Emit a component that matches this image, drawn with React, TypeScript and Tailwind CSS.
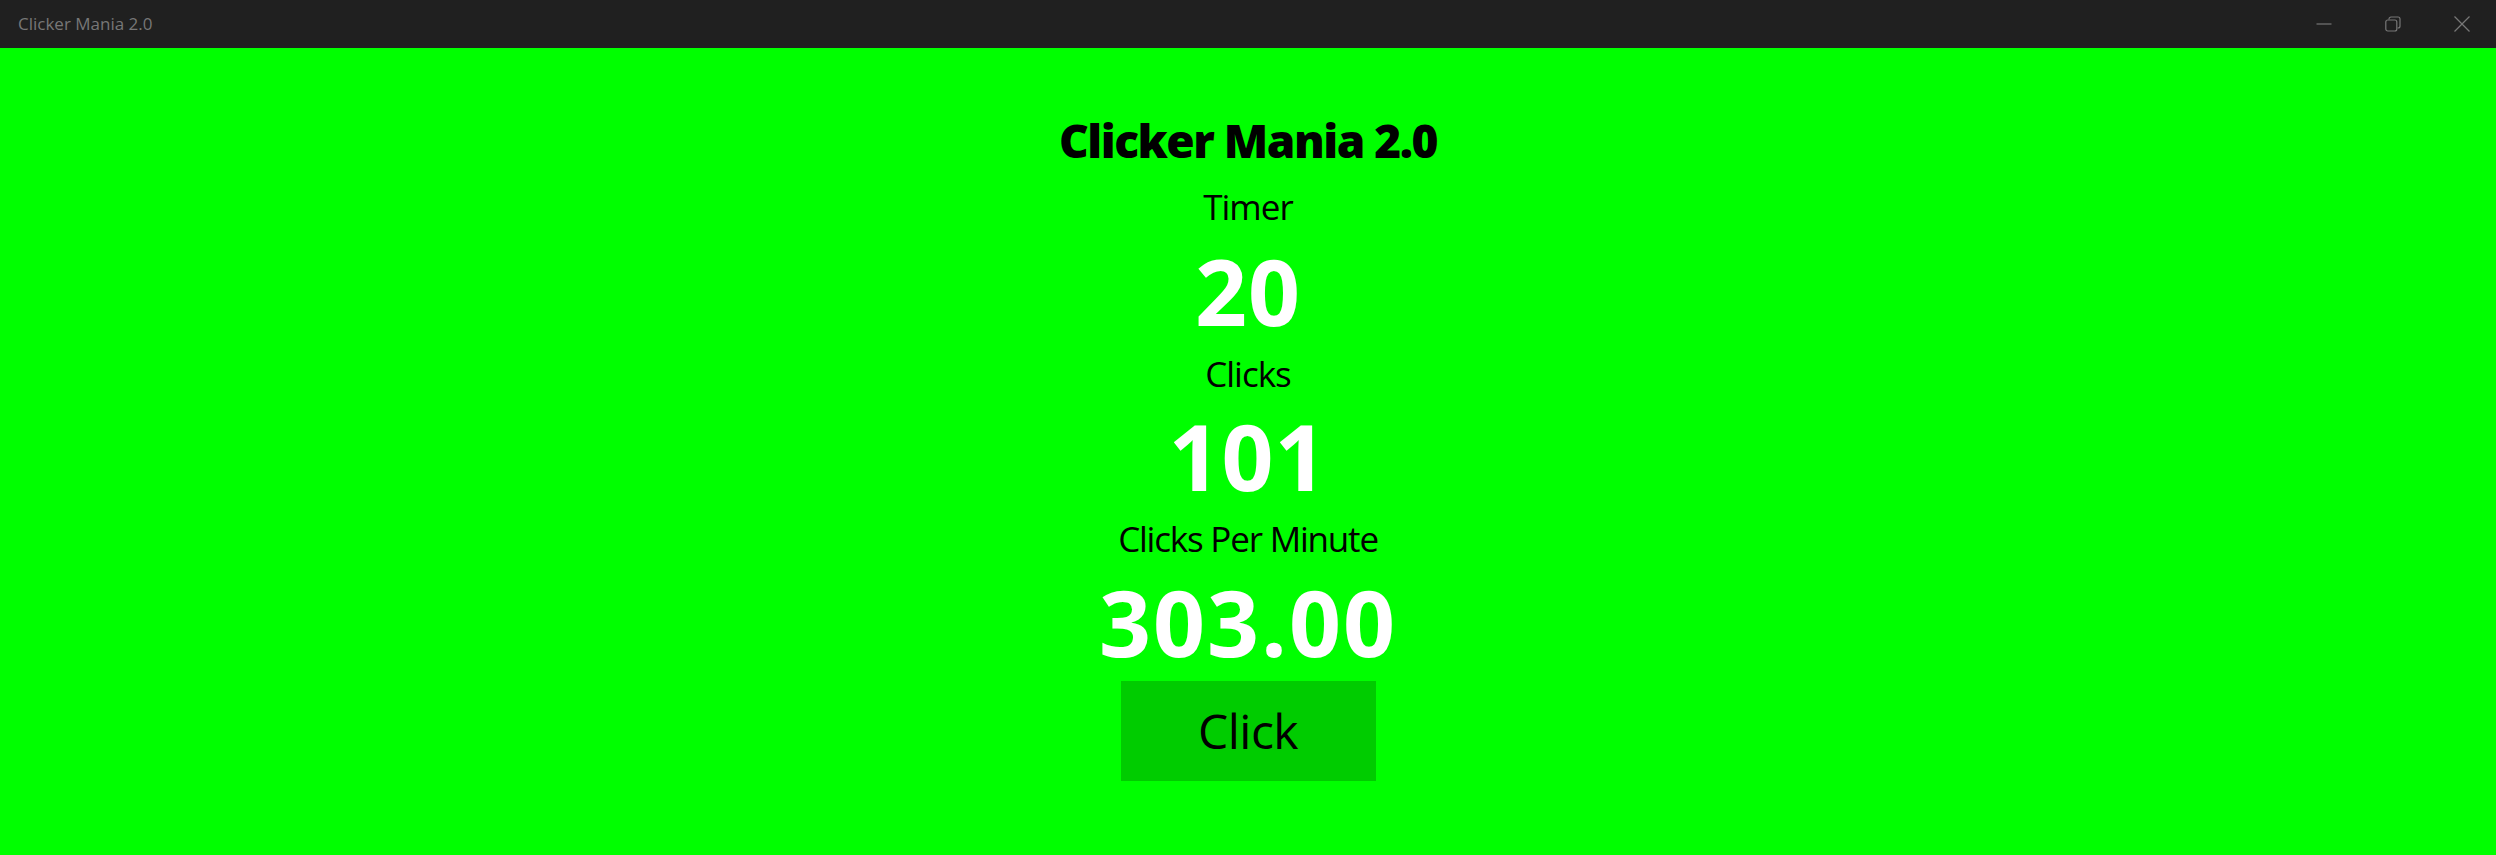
import React from "react";

const sans = { fontFamily: '"Open Sans", "Noto Sans", sans-serif' };

const App = () => {
  return (
    <div className="w-[2496px] h-[855px] flex flex-col bg-[#00ff00]" style={sans}>
      {/* Title bar */}
      <div className="h-[48px] bg-[#202020] flex items-center shrink-0">
        <span className="pl-[18px] text-[17px] text-[#777777] flex-1">Clicker Mania 2.0</span>
        <div className="flex h-full">
          <div className="w-[69px] h-full flex items-center justify-center">
            <svg width="16" height="16" viewBox="0 0 16 16">
              <line x1="0.5" y1="8" x2="15.5" y2="8" stroke="#777" strokeWidth="1.2" />
            </svg>
          </div>
          <div className="w-[69px] h-full flex items-center justify-center">
            <svg width="16" height="16" viewBox="0 0 16 16" fill="none" stroke="#777" strokeWidth="1.2">
              <rect x="0.8" y="4" width="11" height="11" rx="2" />
              <path d="M4 3.5 V3 a2 2 0 0 1 2 -2 H13 a2 2 0 0 1 2 2 V10 a2 2 0 0 1 -2 2 H12.5" />
            </svg>
          </div>
          <div className="w-[69px] h-full flex items-center justify-center">
            <svg width="16" height="16" viewBox="0 0 16 16" stroke="#777" strokeWidth="1.2">
              <line x1="0.5" y1="0.5" x2="15.5" y2="15.5" />
              <line x1="15.5" y1="0.5" x2="0.5" y2="15.5" />
            </svg>
          </div>
        </div>
      </div>

      {/* Game */}
      <div className="flex-1 flex flex-col items-center pt-[69px]">
        <h1 className="text-[46px] leading-none font-extrabold tracking-[-1.5px] text-black">Clicker Mania 2.0</h1>
        <p className="mt-[26px] text-[35px] leading-none tracking-[-1px] text-black">Timer</p>
        <p className="mt-[22px] text-[91px] leading-none font-bold tracking-[1px] text-white">20</p>
        <p className="mt-[19px] text-[35px] leading-none tracking-[-1px] text-black">Clicks</p>
        <p className="mt-[20px] text-[91px] leading-none font-bold tracking-[1px] text-white">101</p>
        <p className="mt-[19px] text-[35px] leading-none tracking-[-1.2px] text-black">Clicks Per Minute</p>
        <p className="mt-[21px] text-[91px] leading-none font-bold tracking-[2px] text-white">303.00</p>
        <button className="mt-[13px] w-[255px] h-[100px] bg-[#00cc00] flex items-center justify-center text-[48px] leading-none tracking-[-0.5px] text-black">
          Click
        </button>
      </div>
    </div>
  );
};

export default App;
